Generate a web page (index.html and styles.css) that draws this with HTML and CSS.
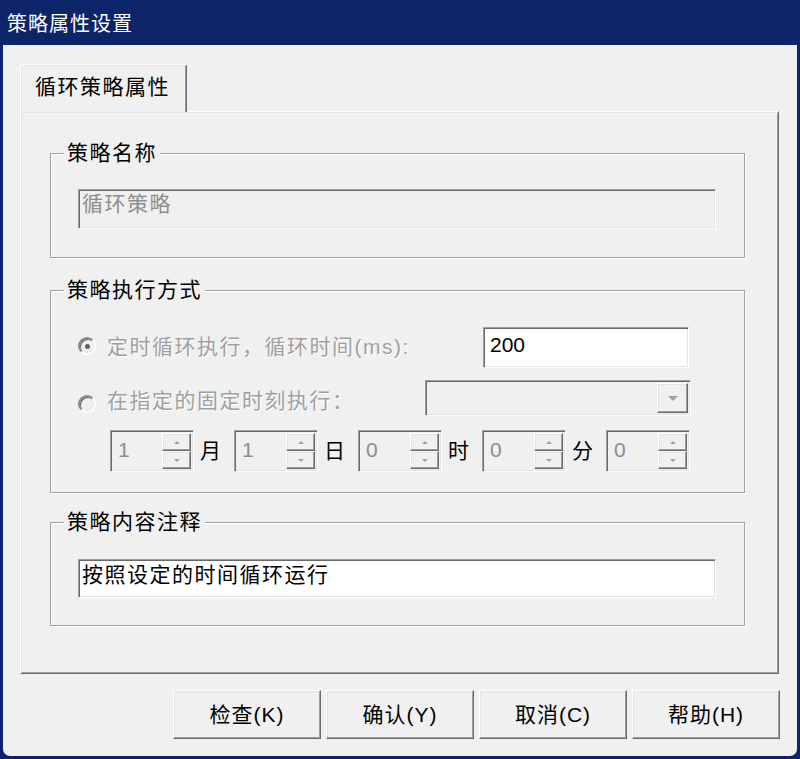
FILE: index.html
```html
<!DOCTYPE html>
<html lang="zh-CN">
<head>
<meta charset="utf-8">
<title>策略属性设置</title>
<link rel="stylesheet" href="styles.css">
</head>
<body>
<div class="window">
  <div class="titlebar">策略属性设置</div>
  <div class="client">
    <div class="tabs"><div class="tab">循环策略属性</div></div>
    <div class="panel">
      <div class="group g1">
        <div class="legend">策略名称</div>
        <div class="field disabled">循环策略</div>
      </div>
      <div class="group g2">
        <div class="legend">策略执行方式</div>
        <div class="row1">
          <span class="radio on"></span>
          <span class="opt">定时循环执行，循环时间(ms):</span>
          <div class="input200">200</div>
        </div>
        <div class="row2">
          <span class="radio"></span>
          <span class="opt">在指定的固定时刻执行：</span>
          <div class="combo"><span class="combo-btn"><i class="tri-down big"></i></span></div>
        </div>
        <div class="row3">
          <div class="spin"><span class="spin-val">1</span><span class="spin-btns"><span class="sb"><i class="tri-up"></i></span><span class="sb"><i class="tri-down"></i></span></span></div>
          <span class="unit">月</span>
          <div class="spin"><span class="spin-val">1</span><span class="spin-btns"><span class="sb"><i class="tri-up"></i></span><span class="sb"><i class="tri-down"></i></span></span></div>
          <span class="unit">日</span>
          <div class="spin"><span class="spin-val">0</span><span class="spin-btns"><span class="sb"><i class="tri-up"></i></span><span class="sb"><i class="tri-down"></i></span></span></div>
          <span class="unit">时</span>
          <div class="spin"><span class="spin-val">0</span><span class="spin-btns"><span class="sb"><i class="tri-up"></i></span><span class="sb"><i class="tri-down"></i></span></span></div>
          <span class="unit">分</span>
          <div class="spin"><span class="spin-val">0</span><span class="spin-btns"><span class="sb"><i class="tri-up"></i></span><span class="sb"><i class="tri-down"></i></span></span></div>
        </div>
      </div>
      <div class="group g3">
        <div class="legend">策略内容注释</div>
        <div class="field white">按照设定的时间循环运行</div>
      </div>
    </div>
    <div class="buttons">
      <div class="btn">检查(K)</div>
      <div class="btn">确认(Y)</div>
      <div class="btn">取消(C)</div>
      <div class="btn">帮助(H)</div>
    </div>
  </div>
</div>
</body>
</html>
```

FILE: styles.css
```css
* { box-sizing: border-box; }
body {
  margin: 0;
  font-family: "Liberation Sans", "Noto Sans CJK SC", sans-serif;
  background: #0c2468;
}
.window {
  width: 800px;
  height: 759px;
  background: #0c2468;
  border-radius: 0 0 9px 9px;
  display: flex;
  flex-direction: column;
}
.titlebar {
  height: 45px;
  flex: none;
  color: #fff;
  font-family: "Noto Sans CJK SC", sans-serif;
  font-size: 20px;
  letter-spacing: 1px;
  padding-left: 7px;
  display: flex;
  align-items: center;
}
.client {
  flex: 1;
  margin: 0 3px 3px;
  background: #f0f0f0;
  border-radius: 0 0 7px 7px;
  display: flex;
  flex-direction: column;
  font-size: 21px;
  letter-spacing: 1.5px;
  color: #000;
}
.tabs {
  margin: 19px 0 0 17px;
  display: flex;
}
.tab {
  position: relative;
  z-index: 1;
  width: 167px;
  height: 48px;
  margin-bottom: -1px;
  background: #f0f0f0;
  border: 1px solid;
  border-color: #fff #696969 transparent #fff;
  border-bottom: 0;
  border-radius: 3px 3px 0 0;
  box-shadow: inset 1px 1px #e3e3e3, inset -1px 0 #a0a0a0;
  padding-left: 14px;
  line-height: 44px;
}
.panel {
  margin: 0 18px 0 17px;
  height: 563px;
  border: 1px solid;
  border-color: #fff #696969 #696969 #fff;
  box-shadow: inset 1px 1px #e3e3e3, inset -1px -1px #a0a0a0;
  padding: 41px 33px 0 29px;
}
.group {
  border: 1px solid #a0a0a0;
  box-shadow: inset 1px 1px #fff, 1px 1px #fff;
}
.g1 { padding-bottom: 28px; }
.g2 { margin-top: 32px; padding-bottom: 20px; }
.g3 { margin-top: 29px; padding-bottom: 27px; }
.legend {
  width: fit-content;
  height: 28px;
  line-height: 28px;
  margin: -15px 0 0 13px;
  padding: 0 3px;
  background: #f0f0f0;
}
.field, .input200, .combo, .spin {
  border: 1px solid;
  border-color: #a0a0a0 #fff #fff #a0a0a0;
  box-shadow: inset 1px 1px #696969, inset -1px -1px #e3e3e3;
}
.field {
  margin: 22px 0 0 27px;
  width: 638px;
  height: 40px;
  padding-left: 3px;
  line-height: 28px;
}
.field.disabled { color: #8d8d8d; }
.g3 .field { margin-top: 23px; height: 39px; line-height: 29px; }
.field.white { background: #fff; }

.row1, .row2 {
  display: flex;
  align-items: center;
}
.row1 {
  margin: 23px 55px 0 27px;
  height: 41px;
}
.row2 {
  margin: 12px 53px 0 27px;
  height: 36px;
}
.row1 .radio { margin-top: -3px; }
.row2 .radio { margin-top: 11px; }
.row2 .opt { margin-top: 8px; }
.radio {
  flex: none;
  width: 18px;
  height: 18px;
  border-radius: 50%;
  border: 2px solid;
  border-color: #8a8a8a #fff #fff #8a8a8a;
  box-shadow: inset 1px 1px #5a5a5a, inset -1px -1px #e3e3e3;
  background: #f0f0f0;
  display: flex;
  align-items: center;
  justify-content: center;
}
.radio.on::after {
  content: "";
  width: 5px;
  height: 5px;
  border-radius: 50%;
  background: #606060;
}
.opt {
  margin-left: 11px;
  padding-bottom: 6px;
  color: #a0a0a0;
  text-shadow: 1px 1px 0 #fff;
}
.input200 {
  margin-left: auto;
  width: 206px;
  height: 41px;
  background: #fff;
  padding-left: 6px;
  line-height: 34px;
  letter-spacing: 0;
}
.combo {
  margin-left: auto;
  width: 266px;
  height: 36px;
  background: #f0f0f0;
  display: flex;
  justify-content: flex-end;
  padding: 2px;
}
.combo-btn, .sb, .btn {
  border: 1px solid;
  border-color: #fff #696969 #696969 #fff;
  box-shadow: inset -1px -1px #a0a0a0, inset 1px 1px #e3e3e3;
  background: #f0f0f0;
  display: flex;
  align-items: center;
  justify-content: center;
}
.combo-btn { width: 31px; }
.tri-down, .tri-up {
  display: block;
  width: 0;
  height: 0;
  border-left: 3px solid transparent;
  border-right: 3px solid transparent;
}
.tri-down { border-top: 3px solid #a0a0a0; }
.tri-up { border-bottom: 3px solid #a0a0a0; }
.tri-down.big {
  border-left-width: 5px;
  border-right-width: 5px;
  border-top-width: 5px;
}
.row3 {
  display: flex;
  align-items: center;
  margin: 14px 0 0 59px;
  height: 42px;
}
.spin {
  width: 84px;
  height: 42px;
  display: flex;
  padding: 2px;
  background: #f0f0f0;
}
.spin-val {
  flex: 1;
  padding-left: 5px;
  line-height: 33px;
  color: #8d8d8d;
  letter-spacing: 0;
}
.spin-btns {
  width: 29px;
  display: flex;
  flex-direction: column;
}
.sb { flex: 1; }
.unit {
  width: 40px;
  padding-left: 6px;
  padding-bottom: 4px;
}
.buttons {
  display: flex;
  justify-content: flex-end;
  gap: 5px;
  margin: 16px 17px 0 0;
}
.btn {
  width: 148px;
  height: 49px;
  letter-spacing: 1px;
  padding-bottom: 4px;
}
```
